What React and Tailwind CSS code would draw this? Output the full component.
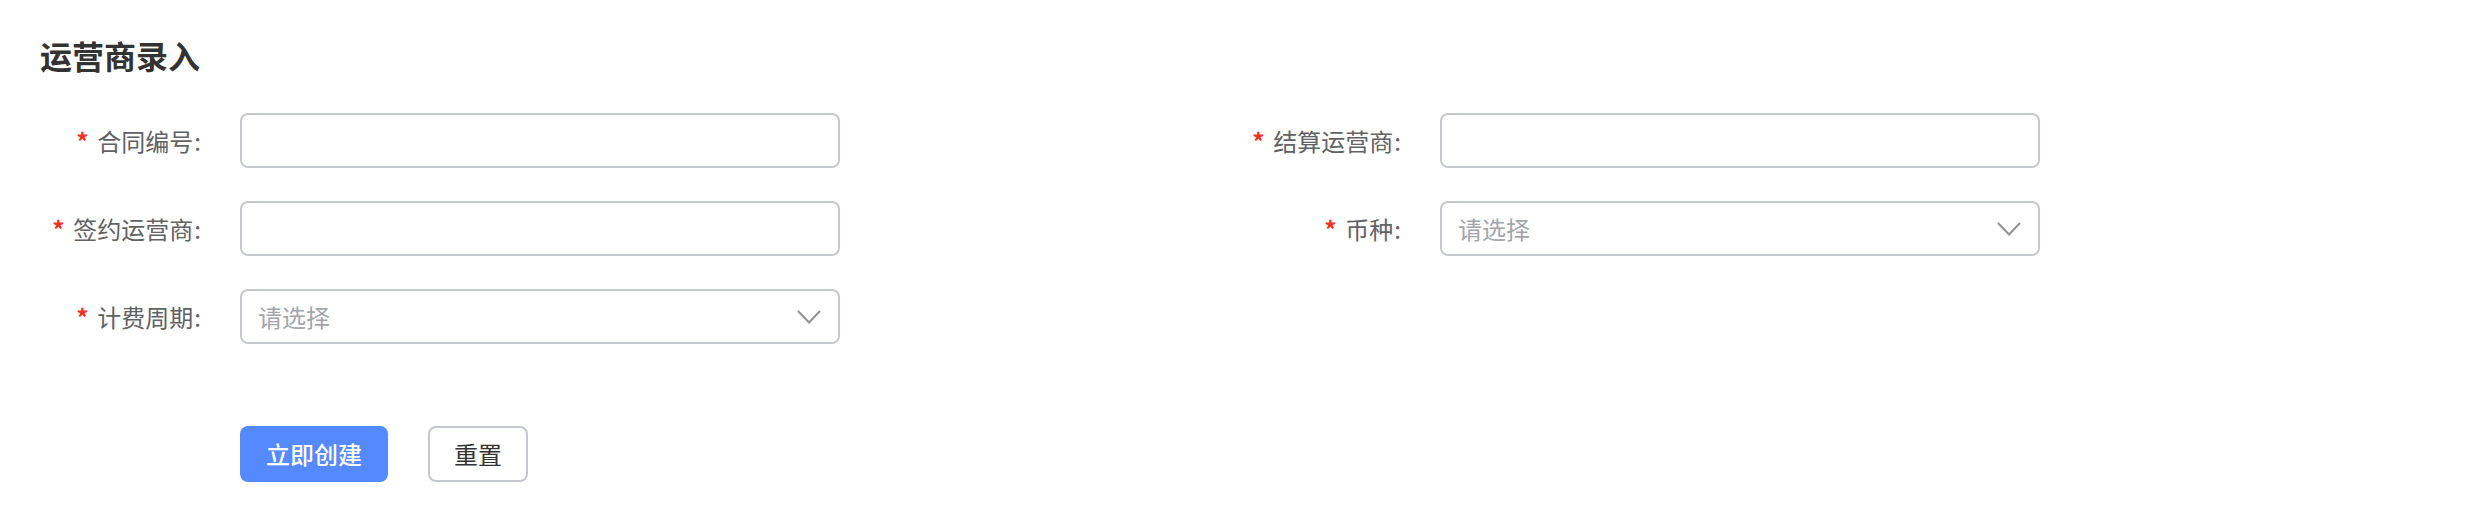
import React from 'react';

const fields = [
  { label: '合同编号', type: 'input' },
  { label: '结算运营商', type: 'input' },
  { label: '签约运营商', type: 'input' },
  { label: '币种', type: 'select' },
  { label: '计费周期', type: 'select' },
];

const Chevron = () => (
  <svg width="24" height="14" viewBox="0 0 24 14" fill="none" className="shrink-0">
    <polyline points="1,1 12,12.5 23,1" stroke="#8f9196" strokeWidth="2" strokeLinejoin="miter" />
  </svg>
);

const FormRow = ({ label, type }) => (
  <div className="flex items-center h-[55px]">
    <label className="w-[200px] shrink-0 pr-[39px] text-right text-[24px] leading-none text-[#606266]">
      <span className="text-[#f5301e] font-bold mr-[9px]">*</span>
      {label}
      <span className="ml-[1px]">:</span>
    </label>
    {type === 'input' ? (
      <input
        type="text"
        className="w-[600px] h-[55px] border-2 border-[#c5c7cf] rounded-[8px] px-4 text-[24px] outline-none bg-white"
      />
    ) : (
      <div className="w-[600px] h-[55px] border-2 border-[#c5c7cf] rounded-[8px] pl-[16px] pr-[17px] flex items-center justify-between bg-white">
        <span className="text-[24px] text-[#a3a5ab] leading-none">请选择</span>
        <Chevron />
      </div>
    )}
  </div>
);

export default function App() {
  return (
    <div
      className="w-[2480px] h-[532px] bg-white px-10 pt-[31px]"
      style={{ fontFamily: '"Noto Sans CJK SC", "Noto Sans", sans-serif' }}
    >
      <h1 className="text-[32px] leading-[48px] font-bold text-[#333333]">运营商录入</h1>

      <div className="mt-[34px] grid grid-cols-[1200px_1200px] gap-y-[33px]">
        {fields.map((f) => (
          <FormRow key={f.label} label={f.label} type={f.type} />
        ))}
      </div>

      <div className="mt-[82px] ml-[200px] flex items-center gap-10">
        <button className="h-[56px] px-[26px] rounded-[8px] bg-[#5589ff] text-white text-[24px] font-medium leading-none">
          立即创建
        </button>
        <button className="h-[56px] px-[24px] rounded-[8px] border-2 border-[#c5c7cf] bg-white text-[#333333] text-[24px] leading-none">
          重置
        </button>
      </div>
    </div>
  );
}
